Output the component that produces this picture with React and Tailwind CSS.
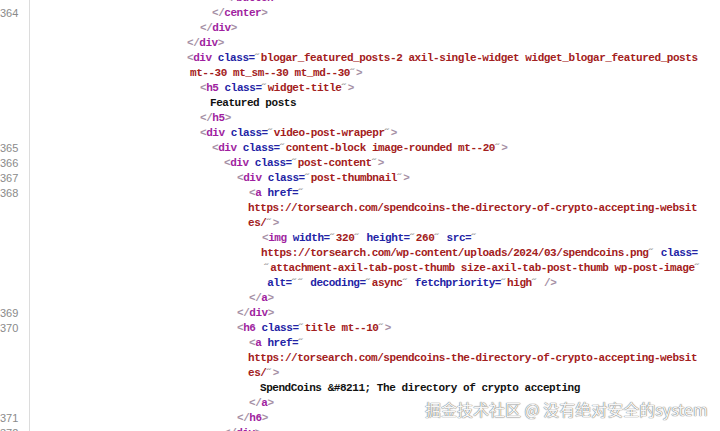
import React from "react";

const C = {
  b: "text-[#a58fa5]",
  t: "text-[#a01fa0]",
  a: "text-[#2323a5]",
  q: "text-[#9a9a9a]",
  v: "text-[#a32020]",
  x: "text-[#111111]",
};

const open = (tag) => [["b", "<"], ["t", tag]];
const close = (tag) => [["b", "</"], ["t", tag], ["b", ">"]];
const attr = (name, val, end) => {
  const r = [["a", " " + name + "="], ["q", "\u02dd"], ["v", val], ["q", "\u02dd"]];
  if (end) r.push(["b", end]);
  return r;
};

const lines = [
  { pl: "pl-[224px]", num: "", tok: close("button") },
  { pl: "pl-[212px]", num: "364", tok: close("center") },
  { pl: "pl-[200px]", num: "", tok: close("div") },
  { pl: "pl-[187px]", num: "", tok: close("div") },
  {
    pl: "pl-[187px]",
    num: "",
    tok: [...open("div"), ["a", " class="], ["q", "\u02dd"], ["v", "blogar_featured_posts-2 axil-single-widget widget_blogar_featured_posts"]],
  },
  { pl: "pl-[190px]", num: "", tok: [["v", "mt--30 mt_sm--30 mt_md--30"], ["q", "\u02dd"], ["b", ">"]] },
  { pl: "pl-[200px]", num: "", tok: [...open("h5"), ...attr("class", "widget-title", ">")] },
  { pl: "pl-[210px]", num: "", tok: [["x", "Featured posts"]] },
  { pl: "pl-[200px]", num: "", tok: close("h5") },
  { pl: "pl-[200px]", num: "", tok: [...open("div"), ...attr("class", "video-post-wrapepr", ">")] },
  { pl: "pl-[212px]", num: "365", tok: [...open("div"), ...attr("class", "content-block image-rounded mt--20", ">")] },
  { pl: "pl-[224px]", num: "366", tok: [...open("div"), ...attr("class", "post-content", ">")] },
  { pl: "pl-[237px]", num: "367", tok: [...open("div"), ...attr("class", "post-thumbnail", ">")] },
  { pl: "pl-[249px]", num: "368", tok: [...open("a"), ["a", " href="], ["q", "\u02dd"]] },
  { pl: "pl-[248px]", num: "", tok: [["v", "https://torsearch.com/spendcoins-the-directory-of-crypto-accepting-websit"]] },
  { pl: "pl-[248px]", num: "", tok: [["v", "es/"], ["q", "\u02dd"], ["b", ">"]] },
  {
    pl: "pl-[262px]",
    num: "",
    tok: [...open("img"), ...attr("width", "320"), ...attr("height", "260"), ["a", " src="], ["q", "\u02dd"]],
  },
  {
    pl: "pl-[261px]",
    num: "",
    tok: [["v", "https://torsearch.com/wp-content/uploads/2024/03/spendcoins.png"], ["q", "\u02dd"], ["a", " class="]],
  },
  {
    pl: "pl-[264px]",
    num: "",
    tok: [["q", "\u02dd"], ["v", "attachment-axil-tab-post-thumb size-axil-tab-post-thumb wp-post-image"], ["q", "\u02dd"]],
  },
  {
    pl: "pl-[261px]",
    num: "",
    tok: [...attr("alt", ""), ...attr("decoding", "async"), ...attr("fetchpriority", "high"), ["b", " />"]],
  },
  { pl: "pl-[249px]", num: "", tok: close("a") },
  { pl: "pl-[237px]", num: "369", tok: close("div") },
  { pl: "pl-[237px]", num: "370", tok: [...open("h6"), ...attr("class", "title mt--10", ">")] },
  { pl: "pl-[249px]", num: "", tok: [...open("a"), ["a", " href="], ["q", "\u02dd"]] },
  { pl: "pl-[248px]", num: "", tok: [["v", "https://torsearch.com/spendcoins-the-directory-of-crypto-accepting-websit"]] },
  { pl: "pl-[248px]", num: "", tok: [["v", "es/"], ["q", "\u02dd"], ["b", ">"]] },
  { pl: "pl-[260px]", num: "", tok: [["x", "SpendCoins &#8211; The directory of crypto accepting"]] },
  { pl: "pl-[249px]", num: "", tok: close("a") },
  { pl: "pl-[237px]", num: "371", tok: close("h6") },
  { pl: "pl-[224px]", num: "372", tok: close("div") },
];

export default function App() {
  return (
    <div className="relative w-[720px] h-[431px] overflow-hidden bg-white">
      <div className="flex flex-col -mt-[9px]">
        {lines.map((l, i) => (
          <div key={i} className="flex h-[15px]">
            <div className="w-[30px] shrink-0 border-r border-[#dcdcdc] h-[15px] pr-[12px] text-right font-['Liberation_Sans',sans-serif] text-[11px] leading-[15px] text-[#8a8a8a]">
              {l.num}
            </div>
            <div
              className={
                "-ml-[30px] whitespace-pre font-['Liberation_Mono',monospace] font-semibold text-[11px] tracking-[-0.45px] leading-[15px] " +
                l.pl
              }
            >
              {l.tok.map(([k, s], j) => (
                <span key={j} className={C[k]}>
                  {s}
                </span>
              ))}
            </div>
          </div>
        ))}
      </div>
      <div className="absolute left-[425px] top-[399px] whitespace-nowrap font-['Noto_Sans_CJK_SC','Liberation_Sans',sans-serif] text-[16px] leading-[20px] text-[#f6f6f6] [text-shadow:0_0_1px_#666,0_0_1px_#777]">
        掘金技术社区 @ 没有绝对安全的system
      </div>
    </div>
  );
}
